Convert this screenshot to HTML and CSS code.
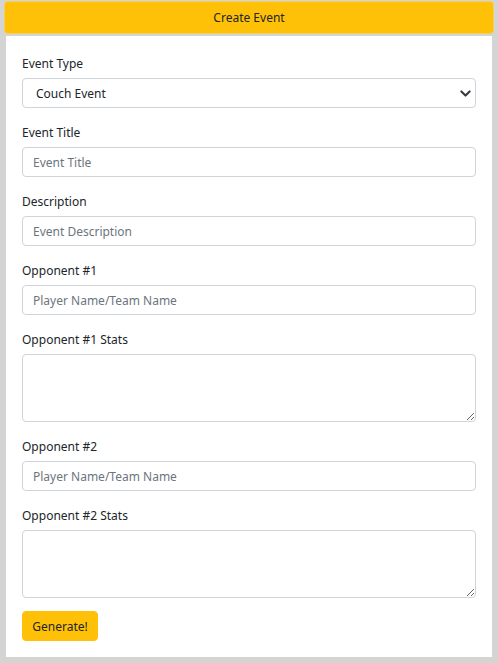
FILE: index.html
```html
<!DOCTYPE html>
<html>
<head>
<meta charset="utf-8">
<link rel="stylesheet" href="styles.css">
</head>
<body>
<div class="page">
  <div class="header">Create Event</div>
  <div class="card">
    <div class="group">
      <label class="label">Event Type</label>
      <div class="select">
        <span>Couch Event</span>
        <svg class="chev" width="11" height="11" viewBox="0 0 16 16"><path d="M2 5l6 6 6-6" fill="none" stroke="#343a40" stroke-width="3" stroke-linecap="round" stroke-linejoin="round"/></svg>
      </div>
    </div>
    <div class="group">
      <label class="label">Event Title</label>
      <input class="input" placeholder="Event Title">
    </div>
    <div class="group">
      <label class="label">Description</label>
      <input class="input" placeholder="Event Description">
    </div>
    <div class="group">
      <label class="label">Opponent #1</label>
      <input class="input" placeholder="Player Name/Team Name">
    </div>
    <div class="group">
      <label class="label">Opponent #1 Stats</label>
      <textarea class="input area"></textarea>
    </div>
    <div class="group">
      <label class="label">Opponent #2</label>
      <input class="input" placeholder="Player Name/Team Name">
    </div>
    <div class="group">
      <label class="label">Opponent #2 Stats</label>
      <textarea class="input area"></textarea>
    </div>
    <button class="btn">Generate!</button>
  </div>
</div>
</body>
</html>
```

FILE: styles.css
```css
html, body {
  margin: 0;
  padding: 0;
  background: #d4d4d4;
  font-family: "Noto Sans", "Open Sans", sans-serif;
  color: #212529;
}
.page {
  padding: 1px 4px 0 4px;
}
.header {
  height: 33px;
  box-sizing: border-box;
  background: #ffc107;
  border: 1px solid #f3cf5e;
  border-radius: 4px;
  display: flex;
  align-items: center;
  justify-content: center;
  font-size: 12px;
  color: #212529;
}
.card {
  margin: 2px 2px 0 2px;
  background: #fff;
  padding: 16px 16px 16px 16px;
  display: flex;
  flex-direction: column;
  align-items: flex-start;
}
.group {
  width: 100%;
  margin-bottom: 13px;
  display: flex;
  flex-direction: column;
}
.label {
  font-size: 12px;
  line-height: 20px;
  padding-top: 2px;
  margin-bottom: 4px;
}
.input, .select {
  box-sizing: border-box;
  width: 100%;
  height: 30px;
  border: 1px solid #ced4da;
  border-radius: 4px;
  padding: 0 10px;
  font-family: inherit;
  font-size: 12px;
  color: #212529;
  background: #fff;
  outline: none;
}
.input::placeholder {
  color: #6c757d;
}
.select {
  display: flex;
  align-items: center;
  justify-content: space-between;
  padding: 0 4px 0 13px;
}
.area {
  height: 68px;
  resize: vertical;
  padding: 6px 10px;
}
.btn {
  height: 30px;
  width: 76px;
  border: 1px solid #ffc107;
  background: #ffc107;
  border-radius: 4px;
  font-family: inherit;
  font-size: 12px;
  color: #212529;
  padding: 0;
}
```
